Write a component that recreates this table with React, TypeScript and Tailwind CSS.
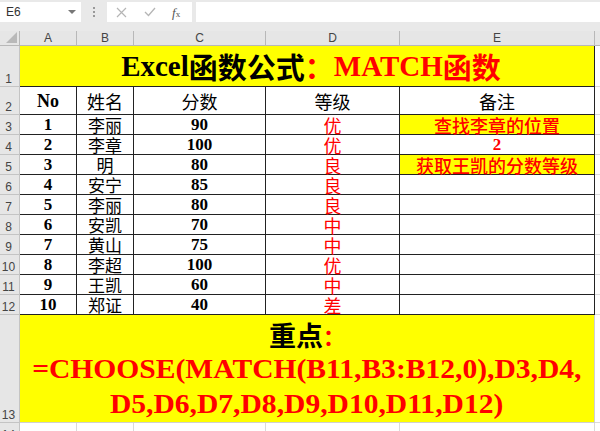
const LATIN = "font-['Liberation_Serif',serif]";
const CJK = "font-['Noto_Sans_CJK_SC','Liberation_Serif',sans-serif]";

const ROWS = [
  { no: "1", name: "李丽", score: "90", grade: "优" },
  { no: "2", name: "李章", score: "100", grade: "优" },
  { no: "3", name: "明", score: "80", grade: "良" },
  { no: "4", name: "安宁", score: "85", grade: "良" },
  { no: "5", name: "李丽", score: "80", grade: "良" },
  { no: "6", name: "安凯", score: "70", grade: "中" },
  { no: "7", name: "黄山", score: "75", grade: "中" },
  { no: "8", name: "李超", score: "100", grade: "优" },
  { no: "9", name: "王凯", score: "60", grade: "中" },
  { no: "10", name: "郑证", score: "40", grade: "差" },
];

function RowNum({ n }: { n: string }) {
  return (
    <div className="bg-[#e6e6e6] border-r border-b border-[#c4c4c4] flex items-end justify-center pr-[2px] pb-[1px] text-[12px] leading-none text-[#444] font-['Liberation_Sans',sans-serif]">
      {n}
    </div>
  );
}

function Cell({ children, className = "" }: { children?: React.ReactNode; className?: string }) {
  return (
    <div className={`border-r border-b border-[#222] flex items-center justify-center leading-none ${className}`}>
      {children}
    </div>
  );
}

function FCell() {
  return <div className="bg-white border-b border-[#dadada]" />;
}

function Toolbar() {
  return (
    <div className="h-[31px] bg-[#e9e9e9] flex items-start pt-[2px] font-['Liberation_Sans',sans-serif]">
      <div className="w-[81px] h-[20px] bg-white flex items-center justify-between pl-[6px] pr-[5px] text-[12px] text-[#333]">
        <span>E6</span>
        <svg width="8" height="5" viewBox="0 0 8 5">
          <polygon points="0,0 8,0 4,4" fill="#777" />
        </svg>
      </div>
      <div className="w-[26px] h-[20px] flex flex-col items-center justify-center gap-[2px]">
        <span className="w-[2px] h-[2px] bg-[#999]" />
        <span className="w-[2px] h-[2px] bg-[#999]" />
        <span className="w-[2px] h-[2px] bg-[#999]" />
      </div>
      <div className="w-[85px] h-[20px] bg-white flex items-center">
        <svg className="ml-[9px]" width="11" height="11" viewBox="0 0 11 11">
          <path d="M1 1L10 10M10 1L1 10" stroke="#b5b5b5" strokeWidth="1.2" />
        </svg>
        <svg className="ml-[17px]" width="12" height="10" viewBox="0 0 12 10">
          <path d="M1 5L4.5 8.5L11 1" stroke="#b5b5b5" strokeWidth="1.3" fill="none" />
        </svg>
        <span className="ml-[16px] text-[13px] italic text-[#555] font-['Liberation_Serif',serif] leading-none">
          f<span className="text-[9px] not-italic">x</span>
        </span>
      </div>
      <div className="ml-[4px] flex-1 h-[20px] bg-white" />
    </div>
  );
}

function ColHead({ label }: { label: string }) {
  return (
    <div className="bg-[#e6e6e6] border-r border-b border-[#b8b8b8] flex items-center justify-center text-[12px] leading-none text-[#444] font-['Liberation_Sans',sans-serif]">
      {label}
    </div>
  );
}

export default function App() {
  return (
    <div className="w-[600px] h-[431px] overflow-hidden bg-white">
      <Toolbar />
      <div className="grid grid-cols-[20px_57px_57px_132px_134px_195px_1fr] grid-rows-[15px_41px_28px_repeat(10,20px)_108px_20px]">
        {/* column headers */}
        <div className="bg-[#e6e6e6] border-r border-b border-[#b8b8b8] flex items-end justify-end p-[2px]">
          <svg width="11" height="11" viewBox="0 0 11 11">
            <polygon points="11,0 11,11 0,11" fill="#b9b9b9" />
          </svg>
        </div>
        {["A", "B", "C", "D", "E"].map((c) => (
          <ColHead key={c} label={c} />
        ))}
        <div className="bg-[#e6e6e6] border-b border-[#b8b8b8]" />

        {/* row 1 title */}
        <RowNum n="1" />
        <div className="col-span-5 bg-[#ffff00] border-r border-b border-[#222] flex items-center justify-center pl-[8px] pt-[1px] text-[29px] font-bold leading-none">
          <span className={`text-black ${LATIN}`}>Excel</span>
          <span className={`text-black ${CJK}`}>函数公式</span>
          <span className={`text-[#ff0000] ${CJK}`}>：</span>
          <span className={`text-[#ff0000] ${LATIN}`}>MATCH</span>
          <span className={`text-[#ff0000] ${CJK}`}>函数</span>
        </div>
        <FCell />

        {/* row 2 header */}
        <RowNum n="2" />
        <Cell className={`text-[18px] font-bold text-black ${LATIN}`}>No</Cell>
        <Cell className={`text-[18px] text-black ${CJK}`}>姓名</Cell>
        <Cell className={`text-[18px] text-black ${CJK}`}>分数</Cell>
        <Cell className={`text-[18px] text-black ${CJK}`}>等级</Cell>
        <Cell className={`text-[18px] text-black ${CJK}`}>备注</Cell>
        <FCell />

        {ROWS.map((r, i) => [
          <RowNum key={`n${i}`} n={String(i + 3)} />,
          <Cell key={`a${i}`} className={`text-[17px] font-bold text-black ${LATIN}`}>{r.no}</Cell>,
          <Cell key={`b${i}`} className={`text-[17px] text-black ${CJK}`}>{r.name}</Cell>,
          <Cell key={`c${i}`} className={`text-[17px] font-bold text-black ${LATIN}`}>{r.score}</Cell>,
          <Cell key={`d${i}`} className={`text-[18px] text-[#ff0000] ${CJK}`}>{r.grade}</Cell>,
          i === 0 ? (
            <Cell key={`e${i}`} className={`bg-[#ffff00] text-[18px] font-medium text-[#ff0000] ${CJK}`}>查找李章的位置</Cell>
          ) : i === 1 ? (
            <Cell key={`e${i}`} className={`text-[17px] font-bold text-[#ff0000] ${LATIN}`}>2</Cell>
          ) : i === 2 ? (
            <Cell key={`e${i}`} className={`bg-[#ffff00] text-[18px] font-medium text-[#ff0000] ${CJK}`}>获取王凯的分数等级</Cell>
          ) : (
            <Cell key={`e${i}`} />
          ),
          <FCell key={`f${i}`} />,
        ])}

        {/* row 13 formula note */}
        <RowNum n="13" />
        <div className="col-span-5 bg-[#ffff00] border-r border-b border-[#d0d0d0] flex flex-col items-center pt-[2px] font-bold">
          <div className="h-[36px] flex items-center leading-none">
            <span className={`text-black text-[27px] ${CJK}`}>重点</span>
            <span className={`text-[#ff0000] text-[22px] ${CJK}`}>：</span>
          </div>
          <div className={`h-[36px] flex items-center text-[27px] leading-none text-[#ff0000] scale-x-[1.095] ${LATIN}`}>
            =CHOOSE(MATCH(B11,B3:B12,0),D3,D4,
          </div>
          <div className={`h-[36px] flex items-center text-[27px] leading-none text-[#ff0000] scale-x-[1.095] ${LATIN}`}>
            D5,D6,D7,D8,D9,D10,D11,D12)
          </div>
        </div>
        <FCell />

        {/* row 14 */}
        <RowNum n="14" />
        {[0, 1, 2, 3, 4].map((k) => (
          <div key={k} className="bg-white border-r border-b border-[#dadada]" />
        ))}
        <FCell />
      </div>
    </div>
  );
}
